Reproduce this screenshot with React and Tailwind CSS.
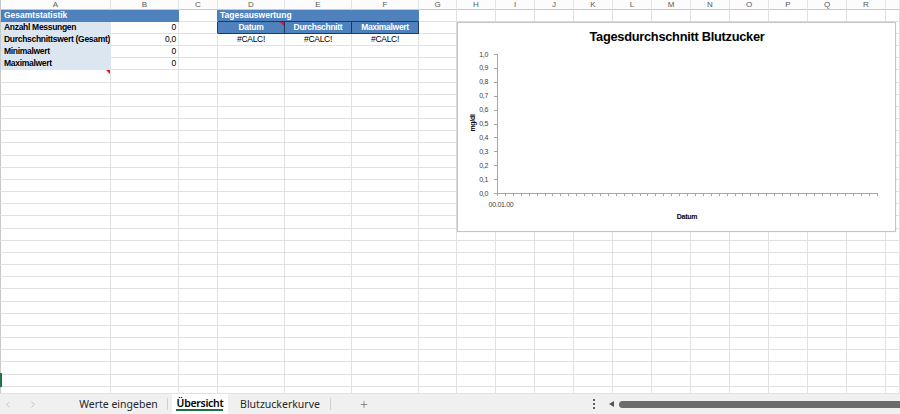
import React from 'react';
import { ChevronLeft, ChevronRight, Plus } from 'lucide-react';

const COLS = [
  'w-[111px] border-l border-l-[#c8c8c8]', 'w-[68px]', 'w-[39px]', 'w-[67px]', 'w-[67px]', 'w-[67px]', 'w-[38px]',
  'w-[39px]', 'w-[39px]', 'w-[39px]', 'w-[39px]', 'w-[39px]', 'w-[39px]', 'w-[39px]', 'w-[39px]', 'w-[39px]',
  'w-[39px]', 'w-[39px]', 'w-[14px]',
];
const LETTERS = ['A', 'B', 'C', 'D', 'E', 'F', 'G', 'H', 'I', 'J', 'K', 'L', 'M', 'N', 'O', 'P', 'Q', 'R', ''];

const GRID = 'border-r-[#e1e1e1]';
const GRIDB = 'border-b-[#e1e1e1]';

function Cell({ w, rc = GRID, bc = GRIDB, className = '', children }) {
  return (
    <div
      className={`${w} shrink-0 h-full border-r border-b ${rc} ${bc} flex items-center overflow-hidden whitespace-nowrap relative ${className}`}
    >
      {children}
    </div>
  );
}

function Tri() {
  return (
    <div className="absolute top-0 right-0 w-0 h-0 border-t-[4px] border-l-[4px] border-t-[#e81123] border-l-transparent" />
  );
}

const STATS = [
  ['Anzahl Messungen', '0'],
  ['Durchschnittswert (Gesamt)', '0,0'],
  ['Minimalwert', '0'],
  ['Maximalwert', '0'],
];

function rowCells(r) {
  const cells = [];
  if (r === 1) {
    cells.push(
      <Cell key="ab" w="w-[179px] border-l border-l-[#c8c8c8]" rc="border-r-[#4f81bd]" bc="border-b-[#4f81bd]" className="bg-[#4f81bd] text-white font-bold pl-[3px] tracking-[0px]">
        Gesamtstatistik
      </Cell>
    );
    cells.push(<Cell key="c" w={COLS[2]} rc="border-r-[#4f81bd]" />);
    cells.push(
      <Cell key="df" w="w-[201px]" rc="border-r-[#4f81bd]" bc="border-b-[#1f3864]" className="bg-[#4f81bd] text-white font-bold pl-[2px] tracking-[0px]">
        Tagesauswertung
      </Cell>
    );
    for (let i = 6; i < COLS.length; i++) cells.push(<Cell key={i} w={COLS[i]} />);
    return cells;
  }
  for (let i = 0; i < COLS.length; i++) {
    const w = COLS[i];
    if (r >= 2 && r <= 5 && i === 0) {
      cells.push(
        <Cell key={i} w={w} rc="border-r-[#dce6f1]" bc="border-b-[#dce6f1]" className="bg-[#dce6f1] font-bold pl-[3px] text-black">
          {STATS[r - 2][0]}
        </Cell>
      );
    } else if (r >= 2 && r <= 5 && i === 1) {
      cells.push(
        <Cell key={i} w={w} className="justify-end pr-[2px] text-black">
          {STATS[r - 2][1]}
        </Cell>
      );
    } else if (r === 6 && i === 0) {
      cells.push(
        <Cell key={i} w={w}>
          <Tri />
        </Cell>
      );
    } else if (r === 2 && i === 2) {
      cells.push(<Cell key={i} w={w} rc="border-r-[#1f3864]" />);
    } else if (r === 2 && i >= 3 && i <= 5) {
      const t = ['Datum', 'Durchschnitt', 'Maximalwert'][i - 3];
      cells.push(
        <Cell key={i} w={w} rc="border-r-[#1f3864]" bc="border-b-[#1f3864]" className="bg-[#4f81bd] text-white font-bold justify-center">
          {t}
          {i === 3 && <Tri />}
        </Cell>
      );
    } else if (r === 3 && i >= 3 && i <= 5) {
      cells.push(
        <Cell key={i} w={w} className="justify-center text-black">
          #CALC!
        </Cell>
      );
    } else {
      cells.push(<Cell key={i} w={w} />);
    }
  }
  return cells;
}

const ROWS = Array.from({ length: 32 }, (_, i) => i + 1);

function Chart() {
  const yTop = 31;
  const yBot = 170;
  const step = (yBot - yTop) / 10;
  const labels = ['1,0', '0,9', '0,8', '0,7', '0,6', '0,5', '0,4', '0,3', '0,2', '0,1', '0,0'];
  const xl = 39;
  const xr = 419;
  const nx = 48;
  const xs = (xr - xl) / nx;
  const ff = "'Liberation Sans', Arial, sans-serif";
  return (
    <div className="absolute left-[457px] top-[22px] w-[439px] h-[210px] bg-white border border-[#c4c4c4] shadow-[0_0_1px_rgba(0,0,0,0.15)]">
      <svg width="437" height="208" viewBox="0 0 437 208" className="block">
        <text
          x="219"
          y="18"
          textAnchor="middle"
          fontFamily={ff}
          fontWeight="700"
          fontSize="13.5"
          fill="#000"
          textLength="175"
          lengthAdjust="spacingAndGlyphs"
        >
          Tagesdurchschnitt Blutzucker
        </text>
        {labels.map((l, i) => (
          <text key={l} x="30" y={yTop + i * step + 2.5} textAnchor="end" fontFamily={ff} fontSize="7" fill="#404040">
            {l}
          </text>
        ))}
        {labels.map((l, i) => (
          <line key={'t' + l} x1="36" x2={xl} y1={Math.round(yTop + i * step) + 0.5} y2={Math.round(yTop + i * step) + 0.5} stroke="#a6a6a6" strokeWidth="1" />
        ))}
        <line x1={xl + 0.5} x2={xl + 0.5} y1={yTop} y2={yBot + 0.5} stroke="#a6a6a6" strokeWidth="1" />
        <line x1={xl} x2={xr} y1={yBot + 0.5} y2={yBot + 0.5} stroke="#a6a6a6" strokeWidth="1" />
        {Array.from({ length: nx + 1 }, (_, i) => (
          <line key={'x' + i} x1={Math.round(xl + i * xs) + 0.5} x2={Math.round(xl + i * xs) + 0.5} y1={yBot} y2={yBot + 3} stroke="#a6a6a6" strokeWidth="1" />
        ))}
        <text x="43" y="184" textAnchor="middle" fontFamily={ff} fontSize="7" fill="#404040">
          00.01.00
        </text>
        <text x="229" y="196" textAnchor="middle" fontFamily={ff} fontSize="7" fontWeight="700" fill="#000">
          Datum
        </text>
        <text x="0" y="0" transform="translate(17 100) rotate(-90)" textAnchor="middle" fontFamily={ff} fontSize="7" fontWeight="700" fill="#000">
          mg/dl
        </text>
      </svg>
    </div>
  );
}

export default function App() {
  return (
    <div className="w-[900px] h-[414px] flex flex-col overflow-hidden bg-white font-['Liberation_Sans',Arial,sans-serif]">
      <div className="flex-1 relative overflow-hidden text-[8.5px] tracking-[-0.3px] leading-none">
        <div className="flex h-[10px] tracking-normal">
          {COLS.map((w, i) => (
            <div
              key={i}
              className={`${w} shrink-0 h-full border-r border-r-[#e4e4e4] border-b border-b-[#c8c8c8] flex items-center justify-center text-[#595959] text-[8px] bg-[#fcfcfc]`}
            >
              {LETTERS[i]}
            </div>
          ))}
        </div>
        {ROWS.map((r) => (
          <div key={r} className={`flex ${r % 6 === 0 ? 'h-[13px]' : 'h-[12px]'}`}>
            {rowCells(r)}
          </div>
        ))}
        <div className="absolute left-0 top-[373px] w-[2px] h-[14px] bg-[#217346]" />
        <Chart />
      </div>
      <div className="h-[21px] shrink-0 flex items-center bg-[#f0f0f0] border-t border-t-[#e2e2e2] text-[10.5px] text-[#262626] font-['Noto_Sans',sans-serif]">
        <div className="ml-[3px] w-[10px] flex justify-center text-[#a8a8a8]">
          <ChevronLeft size={11} strokeWidth={1.5} />
        </div>
        <div className="ml-[15px] w-[10px] flex justify-center text-[#a8a8a8]">
          <ChevronRight size={11} strokeWidth={1.5} />
        </div>
        <div className="ml-[42px] w-[77px] flex justify-center whitespace-nowrap pt-[1px]">Werte eingeben</div>
        <div className="ml-[10px] w-px h-[12px] bg-[#cfcfcf]" />
        <div className="ml-[4px] w-[56px] h-full bg-white flex justify-center items-center relative whitespace-nowrap font-semibold text-black tracking-[-0.3px]">
          Übersicht
          <div className="absolute left-[4px] right-[5px] bottom-[3px] h-[2px] bg-[#1e6e42]" />
        </div>
        <div className="ml-[15px] w-[74px] flex justify-center whitespace-nowrap pt-[1px]">Blutzuckerkurve</div>
        <div className="ml-[13px] w-px h-[12px] bg-[#cfcfcf]" />
        <div className="ml-[28px] w-[10px] flex justify-center text-[#555]">
          <Plus size={11} strokeWidth={1.5} />
        </div>
        <div className="ml-[222px] w-[6px] flex flex-col items-center gap-[2px]">
          <div className="w-[2px] h-[2px] bg-[#333] rounded-full" />
          <div className="w-[2px] h-[2px] bg-[#333] rounded-full" />
          <div className="w-[2px] h-[2px] bg-[#333] rounded-full" />
        </div>
        <div className="ml-[12px] w-0 h-0 border-y-[3px] border-y-transparent border-r-[5px] border-r-[#555]" />
        <div className="ml-[5px] flex-1 h-[7px] rounded-l-full bg-[#6b6b6b]" />
      </div>
    </div>
  );
}
